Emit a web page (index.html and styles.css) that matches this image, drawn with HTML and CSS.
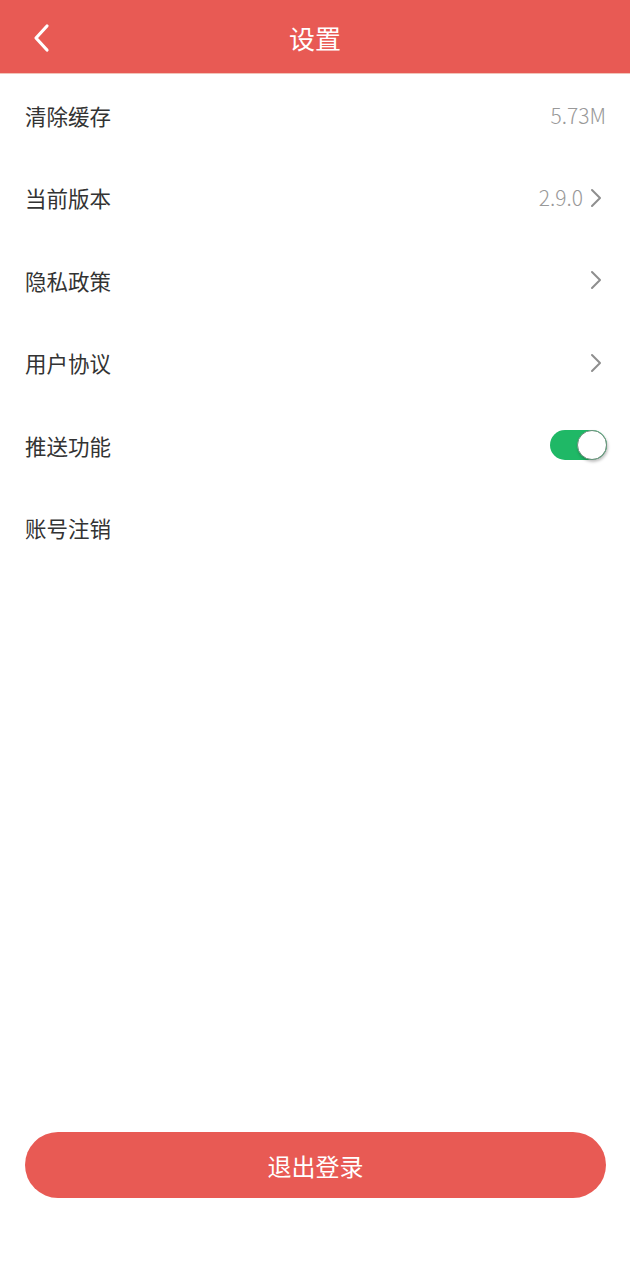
FILE: index.html
```html
<!DOCTYPE html>
<html lang="zh-CN">
<head>
<meta charset="utf-8">
<meta name="viewport" content="width=630">
<title>设置</title>
<link rel="stylesheet" href="styles.css">
</head>
<body>
<div class="page">
  <header class="topbar">
    <span class="back">
      <svg width="20" height="30" viewBox="0 0 20 30"><path d="M16 3 L5 15 L16 27" fill="none" stroke="#fff" stroke-width="3.2" stroke-linecap="round" stroke-linejoin="round"/></svg>
    </span>
    <h1 class="title">设置</h1>
  </header>
  <ul class="list">
    <li class="row"><span class="label">清除缓存</span><span class="value">5.73M</span></li>
    <li class="row"><span class="label">当前版本</span><span class="right"><span class="value">2.9.0</span><svg class="chev" width="12" height="20" viewBox="0 0 12 20"><path d="M2 2 L10 10 L2 18" fill="none" stroke="#8e8e8e" stroke-width="2" stroke-linecap="round" stroke-linejoin="round"/></svg></span></li>
    <li class="row"><span class="label">隐私政策</span><svg class="chev" width="12" height="20" viewBox="0 0 12 20"><path d="M2 2 L10 10 L2 18" fill="none" stroke="#8e8e8e" stroke-width="2" stroke-linecap="round" stroke-linejoin="round"/></svg></li>
    <li class="row"><span class="label">用户协议</span><svg class="chev" width="12" height="20" viewBox="0 0 12 20"><path d="M2 2 L10 10 L2 18" fill="none" stroke="#8e8e8e" stroke-width="2" stroke-linecap="round" stroke-linejoin="round"/></svg></li>
    <li class="row"><span class="label">推送功能</span><span class="toggle"><span class="knob"></span></span></li>
    <li class="row"><span class="label">账号注销</span></li>
  </ul>
  <div class="spacer"></div>
  <div class="footer">
    <button class="logout">退出登录</button>
  </div>
</div>
</body>
</html>
```
FILE: styles.css
```css
* { box-sizing: border-box; }
html, body { margin: 0; padding: 0; background: #fff; }
body {
  font-family: "Noto Sans CJK SC", "Noto Sans", sans-serif;
  width: 630px;
  height: 1280px;
  overflow: hidden;
}
.page {
  display: flex;
  flex-direction: column;
  height: 1280px;
}
.topbar {
  height: 74px;
  background: #e85a54;
  border-bottom: 1px solid #f2c4b8;
  display: flex;
  align-items: center;
  justify-content: center;
  position: relative;
  flex-shrink: 0;
}
.back {
  position: absolute;
  left: 31px;
  top: 23px;
  width: 20px;
  height: 30px;
  display: flex;
}
.title {
  margin: 0;
  font-size: 26px;
  font-weight: 400;
  color: #fff;
  line-height: 1;
  padding-top: 2px;
}
.list {
  list-style: none;
  margin: 0;
  padding: 0;
}
.row {
  height: 82.5px;
  padding: 0 24px 0 25px;
  display: flex;
  align-items: center;
  justify-content: space-between;
}
.label {
  font-size: 21.5px;
  color: #333;
  line-height: 1;
}
.right {
  display: flex;
  align-items: center;
  gap: 7px;
}
.value {
  font-size: 21px;
  color: #999;
  line-height: 1;
  font-family: "Noto Sans CJK SC", "Noto Sans", sans-serif;
  font-weight: 300;
}
.chev { display: block; margin-right: 4px; }
.toggle {
  width: 57px;
  height: 30px;
  border-radius: 15px;
  background: #1fb866;
  position: relative;
  margin-right: -1px;
}
.knob {
  position: absolute;
  right: 0;
  top: 0;
  width: 30px;
  height: 30px;
  border-radius: 50%;
  background: #fff;
  border: 1px solid #6a8f7a;
  box-shadow: 1px 2px 3px rgba(0,0,0,0.25);
}
.spacer { flex: 1; }
.footer {
  padding: 0 24px 82px 25px;
}
.logout {
  width: 100%;
  height: 66px;
  border: none;
  border-radius: 33px;
  background: #e85a54;
  color: #fff;
  font-family: "Noto Sans CJK SC", "Noto Sans", sans-serif;
  font-size: 24px;
  display: block;
}
```
